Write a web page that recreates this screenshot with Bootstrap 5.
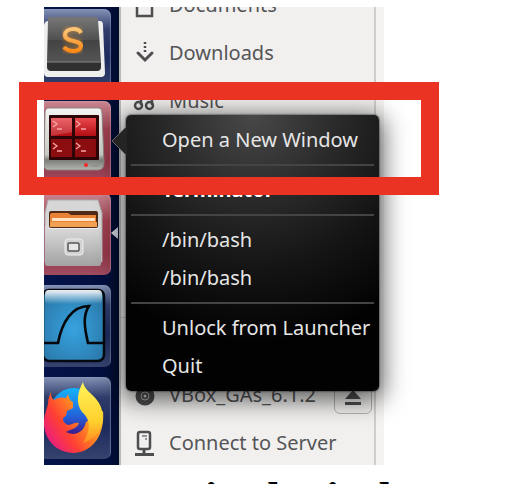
<!DOCTYPE html>
<html lang="en">
<head>
<meta charset="utf-8">
<meta name="viewport" content="width=device-width, initial-scale=1">
<title>Launcher menu</title>
<link rel="stylesheet" href="https://cdn.jsdelivr.net/npm/bootstrap@5.3.0/dist/css/bootstrap.min.css">
<style>
body{background:#fff;font-family:"Noto Sans","Open Sans",sans-serif;font-size:20px;overflow:hidden}
.figure-area{margin:7px 140px 0 44px}
.desktop{overflow:hidden}
.launcher{width:75px;padding:2px 0 6px;gap:10px;background:linear-gradient(90deg,#04134a,#020f3d 85%,#010b2c)}
.tile{width:67px;height:82px;border-radius:0 7px 7px 0;background:linear-gradient(#8492b5,#2f3d6c 25%,#1c2a5c 60%,#36436f);box-shadow:inset -1px 1px 1px #8f9abc88}
.tile-red{background:linear-gradient(#c98791,#9e3f50 35%,#93364a 75%,#a04c5f);box-shadow:inset -1px 1px 1px #d9a1a988}
.tile svg{display:block}
.running{right:1px;top:219px}
.places{background:#f1f0ef;border-left:2px solid #b9b9bb}
.place-list{border-right:2px solid #cfcecd}
.gutter{width:8px;background:#f4f3f2}
.first-places{margin-top:-26px}
.last-places{margin-bottom:-2px}
.place{height:48px;padding-left:12px;gap:14px;color:#555557;text-decoration:none;white-space:nowrap}
.place svg{width:22px;height:26px;flex:none}
.rule-line{height:1px;background:#cfcecd;margin-bottom:53px}
.eject{width:38px;height:38px;border:1px solid #b4b2b0;border-radius:6px;background:#efeeed;margin-left:auto;margin-right:2px}
.quick-menu{left:82px;right:5px;top:108px;padding:6px 0;border-radius:5px;background:radial-gradient(circle at 50% 0,#484848 0,#2a2a2a 28%,#151515 50%,#020202 75%);box-shadow:0 5px 24px 4px rgba(0,0,0,.62),0 0 2px #000}
.entry{height:38px;padding:0 0 0 36px;border:0;background:none;color:#e6e6e6;text-align:left;white-space:nowrap;line-height:38px}
.entry-title{color:#fff;font-weight:700}
.split{height:2px;margin:5px 5px;background:#444}
.pointer{left:-15px;top:10px}
.marker{left:19px;right:85px;top:82px;height:113px;border:18px solid #ea3323;pointer-events:none}
.caption{font:700 47px/50px "Liberation Serif",serif;color:#000;margin:8px 0 0 108px;white-space:nowrap}
</style>
<script src="https://cdn.jsdelivr.net/npm/bootstrap@5.3.0/dist/js/bootstrap.bundle.min.js"></script>
</head>
<body>
<main>
<section class="figure-area position-relative">
 <div class="desktop d-flex">
  <nav class="launcher d-flex flex-column flex-shrink-0 position-relative" aria-label="Launcher">
   <button class="tile border-0 p-0" aria-label="Sublime Text">
    <svg width="66" height="82" viewBox="0 0 66 82">
     <defs><linearGradient id="key" x2="0" y2="1"><stop stop-color="#777"/><stop offset=".5" stop-color="#515151"/><stop offset=".52" stop-color="#434343"/><stop offset="1" stop-color="#555"/></linearGradient>
     <linearGradient id="ess" x2="0" y2="1"><stop stop-color="#f9c578"/><stop offset="1" stop-color="#ff8a17"/></linearGradient>
     <filter id="soft"><feGaussianBlur stdDeviation="2"/></filter></defs>
     <path d="M0 16Q1 12 4 12H56Q59 12 59 16L61 64Q61 68 57 68H4Q0 68 0 64Z" fill="#eeeeec"/>
     <path d="M6 8H51Q54 8 54 11L57 53H3L4 11Q4 8 6 8Z" fill="url(#key)"/>
     <path d="M3 53H57V58Q57 62 53 62H7Q3 62 3 58Z" fill="#303030"/><path d="M3 53H57" stroke="#858585"/>
     <path d="M37 24C34 18 21 19 21 26C21 34 37 30 37 37C36 44 24 43 20 38" fill="none" stroke="#ff9b27" stroke-width="6" opacity=".45" filter="url(#soft)"/>
     <path d="M37 24C34 18 21 19 21 26C21 34 37 30 37 37C36 44 24 43 20 38" fill="none" stroke="url(#ess)" stroke-width="4"/>
    </svg></button>
   <button class="tile tile-red border-0 p-0" aria-label="Terminator">
    <svg width="66" height="82" viewBox="0 0 66 82">
     <defs><linearGradient id="case" x2="0" y2="1"><stop stop-color="#f5f5f3"/><stop offset=".75" stop-color="#c8c9c5"/><stop offset=".84" stop-color="#7c7f79"/><stop offset="1" stop-color="#b5b7b0"/></linearGradient>
     <linearGradient id="red" x2="0" y2="1"><stop stop-color="#e94a50"/><stop offset="1" stop-color="#b40d12"/></linearGradient></defs>
     <path d="M5 7H54Q58 7 58 12L60 62Q60 69 54 69H4Q0 69 0 63L1 12Q1 7 5 7Z" fill="url(#case)" stroke="#8c8481"/>
     <rect x="5" y="14" width="50" height="45" rx="1" fill="#2d0507"/>
     <path d="M7 17H28V35H7ZM31 17H52V35H31Z" fill="url(#red)"/><path d="M7 38H28V56H7ZM31 38H52V56H31Z" fill="#8b0d10"/>
     <path d="M7 17H28V31L7 35Z" fill="#fff" opacity=".15"/>
     <g fill="none" stroke="#f6a5a5" stroke-width="1.300"><path d="M9 20l4 3-4 3M13 28h5M32 20l4 3-4 3M37 28h5M9 42l4 3-4 3M13 50h5M32 42l4 3-4 3M37 50h5"/></g>
     <circle cx="42" cy="64" r="2" fill="#f02a2a"/><path d="M48 65h6" stroke="#858781"/>
    </svg></button>
   <button class="tile tile-red border-0 p-0" aria-label="Files">
    <svg width="66" height="82" viewBox="0 0 66 82">
     <defs><linearGradient id="box" x2="0" y2="1"><stop stop-color="#dcdcdc"/><stop offset="1" stop-color="#a2a2a2"/></linearGradient></defs>
     <path d="M4 7H54L58 20V69H1V20Z" fill="#d6d6d6" stroke="#aaa"/>
     <rect x="5" y="18" width="49" height="17" rx="2" fill="#4f2a16"/>
     <path d="M6 22Q6 20 8 20H24L27 22H52V34H6Z" fill="#e98234"/><path d="M8 25H51V28H8Z" fill="#ffe3c3"/><path d="M6 29H53V34H6Z" fill="#f0a154"/>
     <path d="M1 33H5V35H54V33H57V71Q57 73 55 73H3Q1 73 1 71Z" fill="url(#box)"/><path d="M5 35.500H54" stroke="#eee"/>
     <rect x="21" y="46" width="18" height="16" rx="3" fill="#d3d3d3" stroke="#eee"/><rect x="24" y="50" width="11" height="8" rx="1" fill="#e6e6e6" stroke="#555" stroke-width="1.500"/>
    </svg></button>
   <button class="tile border-0 p-0" aria-label="Wireshark">
    <svg width="66" height="82" viewBox="0 0 66 82">
     <defs><radialGradient id="sea" cx=".5" cy=".55" r=".65"><stop stop-color="#37a2df"/><stop offset="1" stop-color="#2a78a8"/></radialGradient>
     <linearGradient id="foam" x2="0" y2="1"><stop stop-color="#fff" stop-opacity=".95"/><stop offset="1" stop-color="#fff" stop-opacity="0"/></linearGradient></defs>
     <rect x="-1" y="5" width="61" height="71" rx="6" fill="url(#sea)" stroke="#050a10" stroke-width="2.500"/>
     <rect x="1" y="5" width="57" height="14" rx="4" fill="url(#foam)"/>
     <path d="M0 58H14C18 37 28 21 45 21C39 30 40 41 44 58H60" fill="none" stroke="#05080b" stroke-width="2.600"/>
    </svg></button>
   <button class="tile border-0 p-0" aria-label="Firefox">
    <svg width="66" height="82" viewBox="0 0 66 82">
     <defs><linearGradient id="fire" x1="1" x2="0" y1=".1" y2=".8"><stop stop-color="#fff04a"/><stop offset=".35" stop-color="#ff9a1f"/><stop offset=".68" stop-color="#ff4133"/><stop offset="1" stop-color="#e5188a"/></linearGradient>
     <linearGradient id="sky" x2="0" y2="1"><stop stop-color="#13b4fb"/><stop offset=".6" stop-color="#2460d8"/><stop offset="1" stop-color="#42107e"/></linearGradient>
     <linearGradient id="tail" x2="0" y2="1"><stop stop-color="#fff45a"/><stop offset=".65" stop-color="#ffd02d"/><stop offset="1" stop-color="#ff8d22"/></linearGradient></defs>
     <circle cx="30" cy="35" r="24" fill="url(#sky)"/>
     <path d="M8 13C6 18 7 20 10 23C14 20 18 20 22 21L24 17C25 21 26 24 29 25L29 31L23 34L22 39C18 40 18 44 22 47C26 50 29 45 35 46C33 52 26 52 22 55C31 60 40 55 42 45L59 34C61 56 50 75 30 76C12 76 0 62 0 46C0 38 3 32 4 27C4 21 6 17 8 13Z" fill="url(#fire)"/>
     <path d="M39 5C41 17 57 18 59 39C59 51 52 62 39 66C48 52 46 42 38 35C31 26 34 14 39 5Z" fill="url(#tail)"/>
    </svg></button>
   <svg class="running position-absolute" width="7" height="14" viewBox="0 0 7 14" aria-hidden="true"><path d="M0 7L7 1V13Z" fill="#d4d7df"/></svg>
  </nav>
  <div class="places d-flex flex-grow-1 position-relative">
   <div class="place-list d-flex flex-column flex-grow-1">
    <div class="first-places">
     <a href="#" class="place d-flex align-items-center"><svg viewBox="0 0 22 26"><path d="M4 2H19V24H4Z" fill="none" stroke="#4e4e50" stroke-width="2.500"/></svg>Documents</a>
     <a href="#" class="place d-flex align-items-center"><svg viewBox="0 0 22 26"><path d="M12 2V14" fill="none" stroke="#4e4e50" stroke-width="2.500" stroke-dasharray="2 2"/><path d="M5 13L12 20L19 13" fill="none" stroke="#4e4e50" stroke-width="3" stroke-linecap="round"/></svg>Downloads</a>
     <a href="#" class="place d-flex align-items-center"><svg viewBox="0 0 22 26"><path d="M8 17V4M19 17V4" stroke="#4e4e50" stroke-width="2.500"/><circle cx="5.500" cy="17.500" r="3.500" fill="none" stroke="#4e4e50" stroke-width="2.500"/><circle cx="16.500" cy="17.500" r="3.500" fill="none" stroke="#4e4e50" stroke-width="2.500"/></svg>Music</a>
    </div>
    <div class="mt-auto last-places">
     <div class="rule-line"></div>
     <div class="place d-flex align-items-center"><svg viewBox="0 0 22 26"><circle cx="12" cy="14" r="9.500" fill="#4e4e50"/><circle cx="12" cy="14" r="4" fill="none" stroke="#bbb"/><circle cx="12" cy="14" r="1.500" fill="#ddd"/></svg><a href="#" class="text-reset text-decoration-none">VBox_GAs_6.1.2</a>
      <button class="eject p-0 d-flex align-items-center justify-content-center" aria-label="Eject"><svg viewBox="0 0 22 26"><path d="M3 17L11 8L19 17ZM3 20H19V23H3Z" fill="#4e4e50"/></svg></button></div>
     <a href="#" class="place d-flex align-items-center"><svg viewBox="0 0 22 26"><rect x="5" y="2" width="12" height="17" rx="2" fill="none" stroke="#4e4e50" stroke-width="2.500"/><path d="M9 6H14M12 9H14" stroke="#777" stroke-width="1.500"/><path d="M11 19V24M2 24.500H21" stroke="#4e4e50" stroke-width="3"/></svg>Connect to Server</a>
    </div>
   </div>
   <div class="gutter"></div>
  </div>
 </div>
 <div class="quick-menu position-absolute d-flex flex-column" role="menu">
  <svg class="pointer position-absolute" width="16" height="32" viewBox="0 0 16 32" aria-hidden="true"><path d="M16 1L1 16L16 31Z" fill="#242424"/><path d="M15 2L1 16L15 30" fill="none" stroke="#686868"/></svg>
  <button class="entry" role="menuitem">Open a New Window</button>
  <div class="split"></div>
  <button class="entry entry-title" role="menuitem">Terminator</button>
  <div class="split"></div>
  <button class="entry" role="menuitem">/bin/bash</button>
  <button class="entry" role="menuitem">/bin/bash</button>
  <div class="split"></div>
  <button class="entry" role="menuitem">Unlock from Launcher</button>
  <button class="entry" role="menuitem">Quit</button>
 </div>
</section>
<p class="caption">terminal window</p>
<div class="marker position-absolute"></div>
</main>
</body>
</html>
